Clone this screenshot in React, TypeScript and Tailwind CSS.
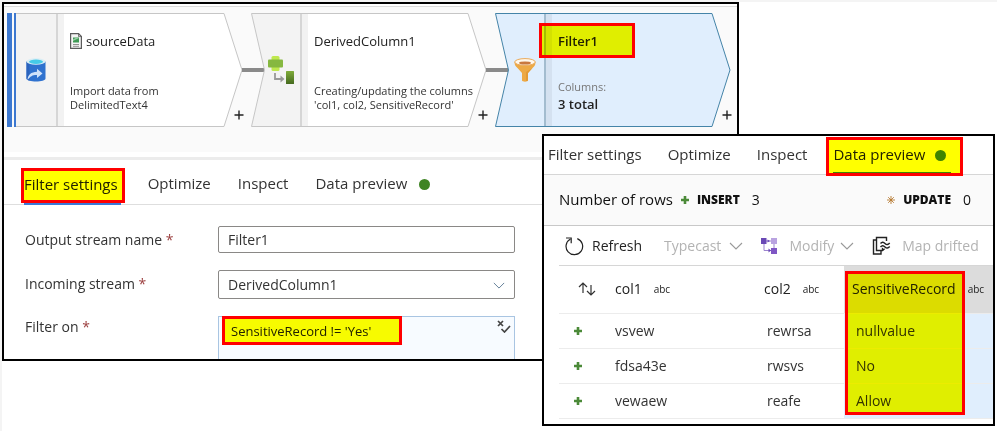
import { useState, type ReactNode } from "react";

const tabs = ["Filter settings", "Optimize", "Inspect", "Data preview"];

const rows = [
  { col1: "vsvew", col2: "rewrsa", sensitive: "nullvalue" },
  { col1: "fdsa43e", col2: "rwsvs", sensitive: "No" },
  { col1: "vewaew", col2: "reafe", sensitive: "Allow" },
];

// yellow marker with a red frame, laid over the content below it
const Marker = ({ className }: { className: string }) => (
  <span
    aria-hidden="true"
    className={`pointer-events-none absolute border-3 border-[#ff0000] before:absolute before:inset-0 before:bg-[#ffff00] before:mix-blend-multiply ${className}`}
  />
);

const Chevron = ({ className }: { className: string }) => (
  <svg viewBox="0 0 14 8" className={className} fill="none" stroke="currentColor" strokeWidth="1.1">
    <path d="M1 1l6 6 6-6" />
  </svg>
);

const PlusMark = () => (
  <svg viewBox="0 0 8 8" className="h-2 w-2 shrink-0">
    <path d="M2.700 0h2.600v2.700H8v2.600H5.300V8H2.700V5.300H0V2.700h2.700z" fill="#4b8a38" />
  </svg>
);

const SourceIcon = () => (
  <svg viewBox="0 0 20 24" className="h-6 w-5">
    <path d="M.5 3.500v17c0 1.800 4.500 3 9.500 3s9.500-1.200 9.500-3v-17z" fill="#2f72cf" />
    <path d="M.5 3.500v17c0 .8 1 1.600 3 2.100V5z" fill="#2a63bd" />
    <ellipse cx="10" cy="3.500" rx="9.500" ry="3.200" fill="#d8edf5" />
    <ellipse cx="10" cy="3.700" rx="7" ry="2.200" fill="#45cbe8" />
    <path d="M1.500 22c.3-5 3.500-8 9.500-8.200v-3l5.500 4.700-5.500 4.400v-3c-4.500-.1-6.500 1.200-9.500 5.100z" fill="#cfe2fa" />
  </svg>
);

const DerivedIcon = () => (
  <svg viewBox="0 0 26 28" className="h-7 w-[26px]">
    <defs>
      <linearGradient id="leaf" x1="0" y1="0" x2="0" y2="1">
        <stop offset="0" stopColor="#7fac3a" />
        <stop offset="1" stopColor="#45691f" />
      </linearGradient>
    </defs>
    <rect x="3.500" y="0" width="8" height="15" rx="1.500" fill="#bfe84e" />
    <rect x="0" y="3.500" width="15" height="8" rx="1" fill="#86b840" />
    <path d="M7 17v6h7" fill="none" stroke="#999" strokeWidth="1.800" />
    <path d="M12.500 19.500l4 3.500-4 3.500z" fill="#999" />
    <rect x="18" y="15" width="8" height="13" rx=".5" fill="url(#leaf)" />
  </svg>
);

const FilterIcon = () => (
  <svg viewBox="0 0 22 24" className="h-6 w-[22px]">
    <path d="M.5 4c0 3 1 4 3 6l4.500 5v7.500c0 1.500 6 1.500 6 0V15l4.500-5c2-2 3-3 3-6z" fill="#eda945" />
    <path d="M12 14v9c1.300 0 2-.4 2-1V15l4.500-5z" fill="#e39a35" />
    <ellipse cx="11" cy="4" rx="10.300" ry="3.400" fill="#fff8ec" stroke="#e9a95a" strokeWidth="1" />
    <ellipse cx="11" cy="5" rx="6" ry="1.600" fill="#c9783f" />
  </svg>
);

const CsvIcon = () => (
  <svg viewBox="0 0 12 16" className="h-4 w-3">
    <path d="M.6.600h8l2.800 3v11.800H.600z" fill="#f4f4f4" stroke="#5b5b5b" strokeWidth="1.200" />
    <path d="M8.500.600v3h3" fill="none" stroke="#5b5b5b" strokeWidth=".8" />
    <rect x="3" y="4.500" width="6" height="5" fill="#3f9a55" />
    <path d="M3 6.500L5.500 5 9 4.500V5L3 8z" fill="#9ad0a6" />
    <path d="M3 11.500h6M3 13.300h6" stroke="#777" strokeWidth=".8" />
  </svg>
);

const RefreshIcon = () => (
  <svg viewBox="0 0 20 20" className="h-5 w-5" fill="none" stroke="#222" strokeWidth="1.200">
    <path d="M6.500 3A8.300 8.300 0 1 0 13.300 2.600" />
    <path d="M2 2h5.200v5.200" />
  </svg>
);

const ModifyIcon = () => (
  <svg viewBox="0 0 16 16" className="h-4 w-4">
    <path d="M4 3h9M3 5v7.500h9M13 4v9" fill="none" stroke="#9c84cf" strokeWidth="1" />
    <rect x="0" y="0" width="5.500" height="6" fill="#6a49b5" />
    <rect x="10" y="0" width="6" height="6" fill="#b9a3e0" />
    <rect x="10" y="10" width="6" height="6" fill="#7f56c4" />
    <path d="M6.500 1.500L9 3 6.500 4.500zM7.500 10.500l2.500 2-2.500 2z" fill="#6a49b5" />
  </svg>
);

const MapIcon = () => (
  <svg viewBox="0 0 20 20" className="h-5 w-5" fill="none" stroke="#222" strokeWidth="1.400">
    <path d="M14.500 5V1.500H4.500v13h6l4-3.500" />
    <path d="M10.500 14.500V11H14" />
    <path d="M4.500 4H1.500v14h7.500v-3" />
    <path d="M8 7.500c2-2 3.300-1.500 5 0s3 1.500 5-.5M8 11c2-2 3.300-1.500 5 0s3 1.500 5-.5" stroke="#fff" strokeWidth="3.500" />
    <path d="M8.500 7.500c1.700-2 3-1.500 4.500 0s3 1.500 4.700-.5M8.500 11c1.700-2 3-1.500 4.500 0s3 1.500 4.700-.5" />
  </svg>
);

const SortIcon = () => (
  <svg viewBox="0 0 18 14" className="h-3.5 w-[18px]" fill="none" stroke="#333" strokeWidth="1.200">
    <path d="M5 11V1M1 5l4-4 4 4M13 3v10M9 9l4 4 4-4" />
  </svg>
);

const UpdateIcon = () => (
  <svg viewBox="0 0 10 10" className="h-2 w-2" stroke="#b5762c" strokeWidth="1.100">
    <path d="M5 0v10M0 5h10M1.500 1.500l7 7M8.500 1.500l-7 7" />
  </svg>
);

type NodeProps = {
  icon: ReactNode;
  source?: boolean;
  selected?: boolean;
  children: ReactNode;
};

const FlowNode = ({ icon, source, selected, children }: NodeProps) => {
  const outline = source ? "M9 .5H217L235 57L217 113.500H9" : "M.5 .5H217L235 57L217 113.500H.5L13.500 57z";
  return (
    <li className="relative flex h-[114px] w-[244px] shrink-0">
      <svg viewBox="0 0 244 114" className="absolute inset-0 h-full w-full overflow-visible" fill="none">
        <path d={outline} fill={selected ? "#e0eefd" : "#fff"} />
        {!selected && (
          <path d={source ? "M9 .5H50V113.500H9z" : "M.5 .5H50V113.500H.5L13.500 57z"} fill="#f3f3f3" />
        )}
        <path d="M54 1v112" stroke="#000" strokeOpacity=".05" strokeWidth="6" />
        <path d="M50 1v112" stroke={selected ? "#a3bccf" : "#d6d6d6"} strokeWidth="2" />
        <path d={outline} stroke={selected ? "#4584a8" : "#c6c6c6"} />
        {source && <path d="M0 0h5v114H0zM7 0h2v114H7z" fill="#3c78d0" />}
        {!selected && <path d="M235 57h22" stroke="#8a8a8a" strokeWidth="4" />}
      </svg>
      <div className={`relative flex w-[50px] items-center justify-center ${source ? "pl-2" : "pl-2.5"}`}>{icon}</div>
      <div className="relative flex-1 pt-4 pl-[13px]">{children}</div>
      <button type="button" aria-label="Add step" className="absolute right-1.5 bottom-1.5 h-3 w-3">
        <svg viewBox="0 0 12 12" className="h-3 w-3" stroke="#222" strokeWidth="1.400">
          <path d="M6 1.500v9M1.500 6h9" />
        </svg>
      </button>
    </li>
  );
};

const Required = () => <span className="text-[#9c4040]">*</span>;

const App = () => {
  const [name, setName] = useState("Filter1");
  const [stream, setStream] = useState("DerivedColumn1");
  const [expression, setExpression] = useState("SensitiveRecord != 'Yes'");

  return (
    <main className="relative min-h-screen border-t-2 border-l-2 border-[#f4f4f4] bg-white font-['Open_Sans','Noto_Sans',sans-serif] text-sm text-[#333]">
      {/* Data flow window */}
      <section className="mr-[258px] h-[359px] overflow-hidden border-2 border-black bg-white">
        <ol className="mt-0.5 flex border-t border-[#dcdcdc] bg-[#fafafa] pt-1.5 pb-[25px] pl-[3px]">
          <FlowNode icon={<SourceIcon />} source>
            <h2 className="flex items-center gap-1 text-[13px] leading-6 font-medium text-[#222]">
              <CsvIcon />
              sourceData
            </h2>
            <p className="mt-[31px] text-[11px] leading-[14px]">
              Import data from
              <br />
              DelimitedText4
            </p>
          </FlowNode>
          <FlowNode icon={<DerivedIcon />}>
            <h2 className="text-[13px] leading-6 font-medium text-[#222]">DerivedColumn1</h2>
            <p className="mt-[31px] text-[11px] leading-[14px] whitespace-nowrap">
              Creating/updating the columns
              <br />
              'col1, col2, SensitiveRecord'
            </p>
          </FlowNode>
          <FlowNode icon={<FilterIcon />} selected>
            <h2 className="text-[13px] leading-6 font-semibold text-[#222]">Filter1</h2>
            <Marker className="top-2.5 left-[-6px] h-[35px] w-24" />
            <p className="mt-[26px] text-[11px] leading-4 text-[#777]">Columns:</p>
            <p className="text-[13px] leading-[18px] font-semibold text-[#222]">3 total</p>
          </FlowNode>
        </ol>

        <div className="mt-[5px] h-[3px] bg-[#ececec]" />

        <nav className="flex h-[45px] gap-[27px] border-b border-[#dedede] pt-1 pl-5 text-[15px]">
          {tabs.map((tab, i) => (
            <button
              key={tab}
              type="button"
              className={
                i === 0
                  ? "relative -mb-px border-b-2 border-[#3b78d8] pt-0.5 pr-[3px] font-medium text-[#222]"
                  : "flex items-center gap-3"
              }
            >
              {tab}
              {i === 0 && <Marker className="-right-1 -left-[3px] top-1 h-[35px]" />}
              {i === 3 && <span className="h-[11px] w-[11px] rounded-full bg-[#3f8424]" />}
            </button>
          ))}
        </nav>

        <form className="grid grid-cols-[193px_297px] pt-[21px] pl-[21px]">
          <label htmlFor="name" className="leading-7">
            Output stream name <Required />
          </label>
          <input
            id="name"
            value={name}
            onChange={(e) => setName(e.target.value)}
            className="h-[27px] rounded-xs border border-[#8a8886] px-[9px]"
          />
          <label htmlFor="stream" className="mt-4 leading-7">
            Incoming stream <Required />
          </label>
          <div className="relative mt-4">
            <select
              id="stream"
              value={stream}
              onChange={(e) => setStream(e.target.value)}
              className="h-[29px] w-full appearance-none rounded-xs border border-[#8a8886] bg-white px-[9px]"
            >
              <option>DerivedColumn1</option>
            </select>
            <Chevron className="pointer-events-none absolute top-3 right-2.5 h-[7px] w-3 text-[#5c7a94]" />
          </div>
          <label htmlFor="expression" className="mt-3.5 leading-7">
            Filter on <Required />
          </label>
          <div className="relative mt-[17px]">
            <textarea
              id="expression"
              value={expression}
              onChange={(e) => setExpression(e.target.value)}
              className="block h-20 w-full resize-none border border-[#a9c5e2] bg-[#f7fbff] px-3 py-1 text-[13px] leading-5 text-[#222]"
            />
            <Marker className="top-0 left-1 h-[29px] w-[180px]" />
            <svg
              viewBox="0 0 14 13"
              className="absolute top-1 right-1 h-[13px] w-3.5"
              fill="none"
              stroke="#444"
              strokeWidth="1.700"
            >
              <path d="M1 1l5 5M6 1L1 6" />
              <path d="M4.500 9l3 3L13 6" />
            </svg>
          </div>
        </form>
      </section>

      {/* Data preview window, lies over the first one */}
      <section className="absolute top-[132px] right-0.5 left-[540px] overflow-hidden border-2 border-black bg-white pb-[5px]">
        <nav className="flex h-[39px] gap-[26px] border-b border-[#d6d6d6] pl-1 text-[15px]">
          {tabs.map((tab, i) => (
            <button
              key={tab}
              type="button"
              className={
                i === 3
                  ? "relative flex items-center gap-2.5 border-b-2 border-[#3f8424] pt-0.5 pr-[5px] whitespace-nowrap text-[#222]"
                  : "whitespace-nowrap"
              }
            >
              {tab}
              {i === 3 && (
                <>
                  <span className="h-[11px] w-[11px] rounded-full bg-[#3f8424]" />
                  <Marker className="-right-3 -left-[7px] top-px h-[39px]" />
                </>
              )}
            </button>
          ))}
        </nav>

        <div className="flex h-[51px] items-center border-b border-[#c8c8c8] bg-[#fafafa] pr-[22px] pl-[15px] text-[#111]">
          <span className="text-[15px]">Number of rows</span>
          <span className="ml-2 flex items-center gap-2">
            <PlusMark />
            <b className="text-xs font-extrabold">INSERT</b>
            <span className="ml-1">3</span>
          </span>
          <span className="ml-auto flex items-center gap-2">
            <UpdateIcon />
            <b className="text-xs font-extrabold">UPDATE</b>
            <span className="ml-1">0</span>
          </span>
        </div>

        <div className="ml-[15px]">
          <div className="flex h-10 items-center border-b border-[#d6d6d6] pl-[5px] whitespace-nowrap text-[#b3b3b3]">
            <button type="button" className="flex items-center gap-2 text-[#222]">
              <RefreshIcon />
              Refresh
            </button>
            <button type="button" className="ml-[22px] flex items-center gap-2">
              Typecast
              <Chevron className="h-2 w-3.5 text-[#999]" />
            </button>
            <button type="button" className="ml-[18px] flex items-center gap-3">
              <ModifyIcon />
              <span className="flex items-center gap-1.5">
                Modify
                <Chevron className="h-2 w-3.5 text-[#999]" />
              </span>
            </button>
            <button type="button" className="ml-[18px] flex items-center gap-2.5">
              <MapIcon />
              Map drifted
            </button>
          </div>

          <div className="relative">
            <table className="w-full table-fixed border-collapse text-left">
              <thead>
                <tr className="h-[47px] border-b border-[#ececec] whitespace-nowrap text-[#222]">
                  <th className="w-[56px] pl-[19px]">
                    <SortIcon />
                  </th>
                  <th className="w-[149px] font-medium">
                    <span className="flex items-center gap-3">
                      col1 <small className="text-[10px] font-normal">abc</small>
                    </span>
                  </th>
                  <th className="w-20 font-medium">
                    <span className="flex items-center gap-3">
                      col2 <small className="text-[10px] font-normal">abc</small>
                    </span>
                  </th>
                  <th className="bg-[#dcdcdc] pl-2 font-medium">
                    <span className="flex items-center gap-3">
                      SensitiveRecord <small className="text-[10px] font-normal">abc</small>
                    </span>
                  </th>
                </tr>
              </thead>
              <tbody>
                {rows.map((row) => (
                  <tr key={row.col1} className="h-[35px] border-b border-[#ececec]">
                    <td className="pl-[15px]">
                      <PlusMark />
                    </td>
                    <td>{row.col1}</td>
                    <td className="pl-[3px]">{row.col2}</td>
                    <td className="bg-[#e0eefd] pl-3">{row.sensitive}</td>
                  </tr>
                ))}
              </tbody>
            </table>
            <Marker className="top-[5px] left-[286px] h-36 w-[120px]" />
          </div>
        </div>
      </section>
    </main>
  );
};

export default App;
